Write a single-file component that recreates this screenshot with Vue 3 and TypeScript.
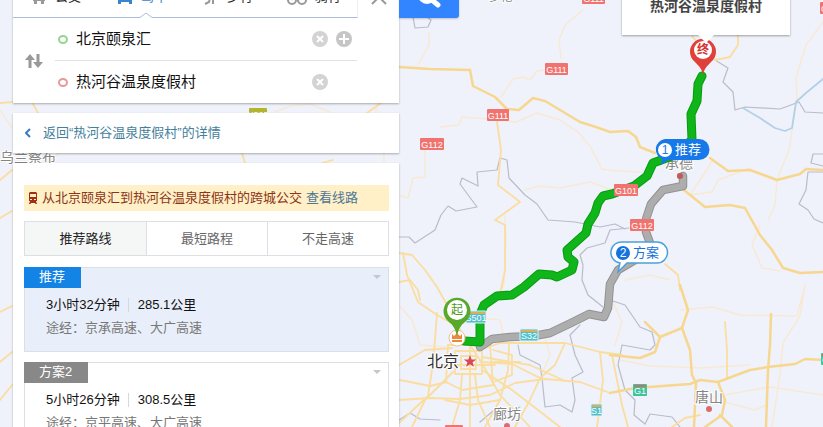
<script setup lang="ts">
import { ref } from 'vue'

interface Mode { id: string; label: string }
interface Route { tag: string; time: string; distance: string; via: string }
interface Shield { text: string; x: number; y: number; w: number; kind: 'national' | 'express' | 'province' | 'local' }

const modes: Mode[] = [
  { id: 'bus', label: '公交' },
  { id: 'car', label: '驾车' },
  { id: 'walk', label: '步行' },
  { id: 'bike', label: '骑行' },
]
const activeMode = ref('car')

const origin = ref('北京颐泉汇')
const destination = ref('热河谷温泉度假村')
function swapEnds() {
  const previous = origin.value
  origin.value = destination.value
  destination.value = previous
}

const strategies = ['推荐路线', '最短路程', '不走高速']
const activeStrategy = ref(0)

const routes: Route[] = [
  { tag: '推荐', time: '3小时32分钟', distance: '285.1公里', via: '途经：京承高速、大广高速' },
  { tag: '方案2', time: '5小时26分钟', distance: '308.5公里', via: '途经：京平高速、大广高速' },
]
const activeRoute = ref(0)

const minorRoads = [
  'M429 33 429 45 418 65',
  'M561 58 559 40 565 25 583 10',
  'M501 97 513 79 523 77 530 80 537 71 546 70',
  'M440 127 459 125 462 117 490 119 516 122 537 113 560 120 578 132 590 146 602 169 618 171 640 172',
  'M425 150 425 177 413 178 408 198 399 195',
  'M525 190 540 186 560 188 590 182 612 190',
  'M823 22 806 45 796 78 797 98 789 150 777 180 775 205 768 220',
  'M713 160 690 195 712 192 718 180 750 168',
  'M760 225 752 245 762 268 780 271',
  'M680 310 713 307 740 315 797 316 805 285 800 316 783 343 780 375 772 427',
  'M625 280 650 275 670 280',
  'M620 360 650 366 700 368 750 365',
  'M696 400 735 393 770 387 823 395',
  'M725 402 755 410 766 405',
  'M612 300 622 322 615 345',
  'M399 305 412 320 420 345 445 347',
  'M480 318 500 320 505 343',
  'M275 112 290 106 310 104 330 112',
  'M40 163 60 153 M376 103 376 113 M384 153 384 163',
  'M505 215 506 240 504 285 495 298',
  'M545 338 550 355 540 378',
  'M0 110 12 128',
]
const roads = [
  'M497 122 501 150 498 185 520 202 495 220 505 225 505 270 500 295',
  'M715 60 730 57 738 45 738 34',
  'M692 36 700 45',
  'M0 103 13 102 M33 104 38 113 M381 103 367 113 M333 160 322 163 M242 153 245 163',
  'M0 180 12 170 M0 218 12 211 M0 312 12 306 M0 362 12 352 M0 400 12 385',
  'M399 253 412 255 425 270 437 287 447 305 460 330 480 360 500 395 530 427',
  'M403 253 407 275 418 302 437 315 455 325',
  'M399 282 410 280 418 290 420 300',
  'M437 313 435 340 432 370 428 396 399 423',
  'M399 400 430 398 460 399 490 395 515 383 545 379 580 382 610 393',
  'M480 350 500 343 565 343 600 352 622 355',
  'M480 362 512 364 540 378',
  'M462 375 460 400 452 427',
  'M475 375 478 400 490 427',
  'M453 372 425 400 412 427',
  'M482 370 512 390 560 427',
  'M482 357 530 365 565 381',
  'M600 353 603 380 597 427',
  'M509 345 508 370 500 400 485 427',
  'M565 343 555 365 540 378 530 400 515 427',
  'M399 365 425 350 452 348',
  'M445 400 470 405 500 400',
  'M448 345 490 345 493 385 462 390 446 382Z',
  'M455 351 482 351 482 374 455 374Z',
  'M461 356 476 356 476 369 461 369Z',
  'M400 380 430 386 447 382',
  'M493 362 520 362',
  'M493 350 512 355 512 375 493 382',
  'M470 345 470 427 M440 365 495 365',
  'M725 322 727 350 727 378',
  'M665 264 678 275 680 290',
  'M672 427 685 418 700 415',
  'M612 355 622 405 628 427',
]
const trunks = [
  'M399 67 430 69 470 70 473 86 481 90 495 97 507 109 519 110 533 98 545 101 560 110 580 122 596 127 610 132 628 131 636 137 640 147 655 153',
  'M710 158 728 171 750 170 777 180 800 174 806 169 823 170',
  'M684 190 705 207 730 205 745 208 760 235 772 250 783 268 800 273 823 272',
  'M680 285 688 310 682 328 660 337 645 322 M660 337 655 352 640 358 610 355',
  'M682 328 690 350 692 375 696 383 694 427',
  'M610 393 635 388 690 384 700 380 718 382 750 370 768 367 795 364 805 359 823 360',
  'M771 314 770 345 768 370 766 427',
  'M718 382 725 400 722 415 705 427 M720 415 732 427',
]
const borders = [
  'M399 237 409 237 415 243 435 230 441 215 448 206 456 211 477 207 460 184 462 178 478 186 477 172 497 170 500 158 507 160 509 178 525 195 537 204 548 220 575 222 600 227 615 224 625 229',
  'M629 228 610 230 605 243 587 248 580 255 583 265 582 280 588 295 603 307',
  'M715 60 728 68 723 82 733 92 735 110 745 107 780 109 799 102 805 112 823 113',
  'M823 154 813 154 811 163 823 166 M823 172 808 172 806 190 799 204 808 210 814 219 823 223',
  'M610 300 625 305 640 327 652 332 655 345 650 350 622 345 618 365 625 390 635 400 634 415 645 424 650 414 672 417 680 427',
  'M518 345 520 355 540 365 542 378 545 407 560 405 572 412 575 400 572 378 583 372 575 355 570 335 580 325',
  'M413 17 415 28 428 27 431 20 427 17',
  'M399 420 410 413 420 419 440 420 M480 422 493 411 508 412 520 407',
]
const rivers = ['M743 108 760 118 775 128 785 131 792 128 796 102 806 93 823 79']

const shields: Shield[] = [
  { text: 'G111', x: 582, y: -8, w: 23, kind: 'national' },
  { text: 'G111', x: 545, y: 63, w: 23, kind: 'national' },
  { text: 'G111', x: 487, y: 109, w: 22, kind: 'national' },
  { text: 'G112', x: 420, y: 138, w: 24, kind: 'national' },
  { text: 'G101', x: 614, y: 184, w: 24, kind: 'national' },
  { text: 'G112', x: 630, y: 219, w: 24, kind: 'national' },
  { text: 'G101', x: 820, y: 2, w: 24, kind: 'national' },
  { text: 'G102', x: 445, y: 425, w: 18, kind: 'national' },
  { text: 'S501', x: 466, y: 311, w: 20, kind: 'province' },
  { text: 'S32', x: 520, y: 329, w: 18, kind: 'province' },
  { text: 'S1', x: 591, y: 404, w: 11, kind: 'province' },
  { text: 'G1', x: 633, y: 384, w: 14, kind: 'express' },
  { text: 'G1', x: 821, y: 353, w: 14, kind: 'express' },
  { text: 'X505', x: 249, y: 108, w: 18, kind: 'local' },
]

const bestPath = 'M702 76 698 84 697 101 691 114 692 140 672 156 653 163 647 176 634 186 612 194 603 196 598 203 595 213 588 224 586 233 567 250 568 257 574 262 572 270 557 277 552 275 539 274 524 287 512 295 497 296 484 305 480 314 480 342 464 341'
const altPath = 'M683 176 683 186 663 190 651 204 646 219 646 232 650 243 635 260 618 270 610 284 608 308 604 317 589 314 571 323 550 333 534 336 510 337 492 339 480 347'
</script>

<template>
  <main class="page">
    <svg class="map" viewBox="0 0 823 427" preserveAspectRatio="xMinYMin slice" role="img" aria-label="地图">
      <g class="line">
        <path v-for="d in minorRoads" :key="d" :d="d" class="minor" />
        <path v-for="d in borders" :key="d" :d="d" class="border" />
        <path v-for="d in rivers" :key="d" :d="d" class="river" />
        <path v-for="d in roads" :key="d" :d="d" class="road" />
        <path v-for="d in trunks" :key="d" :d="d" class="trunk" />
      </g>

      <g class="city">
        <text x="0" y="162">乌兰察布</text>
        <text x="489" y="1" class="small">多伦</text>
        <text x="665" y="168">承德</text>
        <text x="493" y="419">廊坊</text>
        <text x="695" y="402">唐山</text>
      </g>
      <g class="dot">
        <circle cx="680" cy="176" r="3" />
        <circle cx="507" cy="426" r="3" />
        <circle cx="709" cy="409" r="3" />
      </g>

      <g class="line">
        <path :d="altPath" class="alt-edge" />
        <path :d="altPath" class="alt" />
        <path :d="bestPath" class="best-edge" />
        <path :d="bestPath" class="best" />
      </g>
      <circle cx="680" cy="176" r="3" class="faded-dot" />

      <g v-for="s in shields" :key="`${s.x}-${s.y}`" class="shield" :class="s.kind">
        <rect :x="s.x" :y="s.y" :width="s.w" height="12" rx="1" class="plate" />
        <rect v-if="s.kind !== 'national' && s.kind !== 'local'" :x="s.x + 1" :y="s.y + 1" :width="s.w - 2" height="2" class="strip" />
        <text :x="s.x + s.w / 2" :y="s.y + 10">{{ s.text }}</text>
      </g>

      <text x="427" y="367" class="capital">北京</text>
      <path d="M470 355l1.6 4.4 4.6.1-3.6 2.8 1.3 4.5-3.9-2.6-3.9 2.6 1.3-4.5-3.6-2.8 4.6-.1z" class="star" />

      <circle cx="457" cy="338" r="8" class="hub" />
      <path d="M452 334l2 2 3-3 3 3 2-2v5h-10zM452 340h10v2h-10z" class="hub-mark" />

      <g class="pin start">
        <path d="M457 336c-2-8-4-11-8-14a13.500 13.500 0 1 1 16 0c-4 3-6 6-8 14z" />
        <circle cx="457" cy="310" r="10" />
        <text x="457" y="314">起</text>
      </g>
      <g class="pin end">
        <path d="M703 75c-1-6-4-9-8-13a13 13 0 1 1 16 0c-4 4-7 7-8 13z" />
        <circle cx="703" cy="50" r="9" />
        <text x="703" y="54">终</text>
      </g>

      <g class="bubble first">
        <path d="M665 139h34a10.500 10.500 0 0 1 0 21h-31l-7 5 1-6a10.500 10.500 0 0 1 3-20z" />
        <circle cx="665" cy="150" r="7" />
        <text x="665" y="154" class="number">1</text>
        <text x="688" y="154" class="name">推荐</text>
      </g>
      <g class="bubble second">
        <path d="M623 242h34a10.500 10.500 0 0 1 0 21h-30l-9 9 2-9a10.500 10.500 0 0 1 3-21z" />
        <circle cx="623" cy="253" r="7" />
        <text x="623" y="257" class="number">2</text>
        <text x="646" y="257" class="name">方案</text>
      </g>
    </svg>

    <div class="callout">热河谷温泉度假村</div>

    <div class="overlay">
      <div class="column">
        <section class="panel search">
          <div class="head">
            <nav class="modes">
              <button v-for="m in modes" :key="m.id" type="button" class="mode" :class="{ active: m.id === activeMode }" @click="activeMode = m.id">
                <svg v-if="m.id === 'bus'" class="icon" viewBox="0 0 16 16"><path d="M2 1h12v11h-1v3h-3v-3H6v3H3v-3H2zm2 2v4h8V3z" fill-rule="evenodd" fill="currentColor" /></svg>
                <svg v-else-if="m.id === 'car'" class="icon" viewBox="0 0 16 16"><path d="M3 2h10l2 5v8h-3v-2H4v2H1V7zm1 2L3 7h10l-1-3zM3 9v2h3V9zm7 0v2h3V9z" fill-rule="evenodd" fill="currentColor" /></svg>
                <svg v-else-if="m.id === 'walk'" class="icon" viewBox="0 0 16 16"><path d="M9 1v4l-4 3M8 5l2 5v5M7 9l-1 4-4 2M9 6l4 2" fill="none" stroke="currentColor" stroke-width="2" /></svg>
                <svg v-else class="icon wide" viewBox="0 0 20 16"><g fill="none" stroke="currentColor" stroke-width="2"><circle cx="5" cy="11" r="4" /><circle cx="15" cy="11" r="4" /><path d="M5 11l3-7h6l1 7M8 5l3 6 3-5" /></g></svg>
                <span>{{ m.label }}</span>
              </button>
              <svg class="notch" viewBox="0 0 14 6"><path d="M0 5h1l6-4 6 4h1v1H0z" fill="#fff" /><path d="M0 5.500h1l6-4.500 6 4.500h1" fill="none" stroke="#aabdd9" /></svg>
            </nav>
            <button type="button" class="close" aria-label="关闭"><svg viewBox="0 0 16 16" class="icon"><path d="M1 1l14 14M15 1L1 15" stroke="#999" stroke-width="2" /></svg></button>
          </div>
          <form class="ends" @submit.prevent>
            <button type="button" class="swap" aria-label="交换起终点" @click="swapEnds">
              <svg viewBox="0 0 18 16"><path d="M5 15V4M13 1v11" stroke="#999" stroke-width="3" /><path d="M0 7l5-6 5 6zM8 9l5 6 5-6z" fill="#999" /></svg>
            </button>
            <div class="fields">
              <div class="field">
                <i class="ring green"></i>
                <input v-model="origin" type="text" aria-label="起点" />
                <button type="button" class="round" aria-label="清空起点" @click="origin = ''"><svg viewBox="0 0 16 16"><circle cx="8" cy="8" r="8" fill="#d3d3d3" /><path d="M5 5l6 6M11 5l-6 6" stroke="#fff" stroke-width="2" /></svg></button>
                <button type="button" class="round" aria-label="添加途经点"><svg viewBox="0 0 16 16"><circle cx="8" cy="8" r="8" fill="#c6c6c6" /><path d="M3 8h10M8 3v10" stroke="#fff" stroke-width="2" /></svg></button>
              </div>
              <div class="field">
                <i class="ring red"></i>
                <input v-model="destination" type="text" aria-label="终点" />
                <button type="button" class="round" aria-label="清空终点" @click="destination = ''"><svg viewBox="0 0 16 16"><circle cx="8" cy="8" r="8" fill="#d3d3d3" /><path d="M5 5l6 6M11 5l-6 6" stroke="#fff" stroke-width="2" /></svg></button>
                <span class="round"></span>
              </div>
            </div>
          </form>
        </section>

        <a href="#" class="panel back">
          <svg viewBox="0 0 6 10"><path d="M5 1L1 5l4 4" fill="none" stroke="#3a7bc8" stroke-width="2" /></svg>
          <span>返回“热河谷温泉度假村”的详情</span>
        </a>

        <section class="panel results">
          <p class="notice">
            <svg viewBox="0 0 10 12"><path d="M2 0h6l1 1v8H8l1 3H7.500L7 11H3l-.5 1H1l1-3H1V1zm0 2v3h6V2zm0 5v1h2V7zm4 0v1h2V7z" fill-rule="evenodd" fill="#a03010" /></svg>
            <span>从北京颐泉汇到热河谷温泉度假村的跨城公交</span>
            <a href="#">查看线路</a>
          </p>
          <div class="strategies">
            <button v-for="(s, i) in strategies" :key="s" type="button" :class="{ active: i === activeStrategy }" @click="activeStrategy = i">{{ s }}</button>
          </div>
          <article v-for="(r, i) in routes" :key="r.tag" class="route" :class="{ active: i === activeRoute }" @click="activeRoute = i">
            <header>
              <span class="tag">{{ r.tag }}</span>
              <i class="arrow"></i>
            </header>
            <div class="facts"><span>{{ r.time }}</span><span class="distance">{{ r.distance }}</span></div>
            <div class="via">{{ r.via }}</div>
          </article>
        </section>
      </div>
      <button type="button" class="go" aria-label="搜索">
        <svg viewBox="0 0 24 24"><circle cx="10" cy="10" r="7" fill="none" stroke="#fff" stroke-width="4" /><path d="M15 15l6 5" stroke="#fff" stroke-width="5" stroke-linecap="round" /></svg>
      </button>
    </div>
  </main>
</template>

<style>
body {
  margin: 0;
}
</style>

<style scoped>
.page {
  position: relative;
  height: 100vh;
  overflow: hidden;
  background: #eff2fa;
  font: 13px/20px "Liberation Sans", "Noto Sans CJK SC", sans-serif;
  color: #222;
}
button {
  border: 0;
  padding: 0;
  background: none;
  font: inherit;
  color: inherit;
  cursor: pointer;
}
a {
  text-decoration: none;
}
svg {
  display: block;
}

.map {
  position: absolute;
  inset: 0;
  width: 100%;
  height: 100%;
}
.line path {
  fill: none;
  stroke-linejoin: round;
  stroke-linecap: round;
}
.line .minor { stroke: #f8e9d5; stroke-width: 1.5; }
.line .road { stroke: #fadd9f; stroke-width: 1.800; }
.line .trunk { stroke: #f7d78f; stroke-width: 2.500; }
.line .border { stroke: #b9bcc9; stroke-width: 1.200; }
.line .river { stroke: #b3d0e9; stroke-width: 1.800; }
.line .alt-edge { stroke: #929292; stroke-width: 8.500; }
.line .alt { stroke: #adadad; stroke-width: 6.500; }
.line .best-edge { stroke: #089b12; stroke-width: 9; }
.line .best { stroke: #10b51a; stroke-width: 7; }
.city text {
  font-size: 14px;
  fill: #858585;
  stroke: #fff;
  stroke-width: 2;
  paint-order: stroke;
}
.city .small { font-size: 12px; }
.dot circle { fill: #dc6b70; }
.faded-dot { fill: #c55a5a; }
.shield text {
  font-size: 9px;
  text-anchor: middle;
  fill: #fff;
}
.national .plate { fill: #f1736f; }
.province .plate { fill: #51bfca; stroke: #dff3f2; }
.province .strip { fill: #dcae5c; }
.express .plate { fill: #3cc49b; }
.express .strip { fill: #cc7068; }
.local .plate { fill: #b4b52f; }
.capital {
  font-size: 16px;
  fill: #333;
  stroke: #fff;
  stroke-width: 2;
  paint-order: stroke;
}
.star { fill: #dc4850; }
.hub { fill: #fff; stroke: #f2bd90; }
.hub-mark { fill: #ec8a3c; }
.pin text {
  font-size: 12px;
  text-anchor: middle;
}
.pin circle { fill: #fff; }
.start path { fill: #58a92a; }
.start text { fill: #4a9820; }
.end path { fill: #e0403a; }
.end text { fill: #d8332f; font-weight: bold; }
.bubble text { text-anchor: middle; }
.bubble .number { font-size: 12px; }
.bubble .name { font-size: 13px; }
.first path, .first .number { fill: #1778ea; }
.first circle, .first .name { fill: #fff; }
.second path { fill: #fff; stroke: #4ba0dc; stroke-width: 1.500; }
.second circle, .second .name { fill: #1672dc; }
.second .number { fill: #fff; }

.callout {
  position: absolute;
  left: 622px;
  top: -30px;
  box-sizing: border-box;
  width: 168px;
  padding: 26px 0 19px;
  background: #fff;
  box-shadow: 0 1px 2px rgba(0, 0, 0, 0.35);
  font-size: 14px;
  font-weight: bold;
  color: #444;
  text-align: center;
}
.callout::after {
  content: "";
  position: absolute;
  left: 76px;
  top: 100%;
  border: 8px solid transparent;
  border-top-color: #fff;
  border-bottom: 0;
}

.overlay {
  position: relative;
  display: flex;
  align-items: flex-start;
  margin-top: -24px;
  padding-left: 13px;
}
.column {
  display: flex;
  flex-direction: column;
  gap: 10px;
  flex: 0 0 386px;
}
.panel {
  background: #fff;
  box-shadow: 0 1px 2px rgba(0, 0, 0, 0.3);
}
.head {
  display: flex;
  height: 42px;
}
.modes {
  position: relative;
  flex: 1;
  display: grid;
  grid-template-columns: repeat(4, 1fr);
  box-sizing: border-box;
  border-bottom: 1px solid #aabdd9;
  border-right: 1px solid #eee;
}
.mode {
  display: flex;
  align-items: center;
  justify-content: center;
  gap: 8px;
}
.mode .icon { color: #999; }
.mode.active, .mode.active .icon { color: #3a82d2; }
.icon { width: 16px; height: 16px; }
.icon.wide { width: 20px; }
.notch {
  position: absolute;
  left: 126px;
  bottom: -1px;
  width: 14px;
  height: 6px;
}
.close {
  width: 41px;
  display: grid;
  place-items: center;
}
.ends {
  display: flex;
  align-items: center;
}
.swap {
  width: 42px;
  display: flex;
  justify-content: center;
}
.swap svg { width: 18px; height: 16px; }
.fields {
  flex: 1;
  min-width: 0;
  margin-right: 42px;
}
.field {
  display: flex;
  align-items: center;
  gap: 8px;
  height: 42px;
  padding-right: 5px;
}
.field + .field { border-top: 1px solid #e2e2e2; }
.ring {
  width: 6px;
  height: 5px;
  margin-left: 3px;
  border: 2px solid;
  border-radius: 50%;
}
.green { border-color: #92d692; }
.red { border-color: #e59a9a; }
.field input {
  flex: 1;
  min-width: 0;
  height: 28px;
  border: 0;
  padding: 0;
  outline: 0;
  background: none;
  font: 15px/28px "Liberation Sans", "Noto Sans CJK SC", sans-serif;
  color: #111;
}
.round, .round svg {
  width: 16px;
  height: 16px;
}
.back {
  display: flex;
  align-items: center;
  gap: 12px;
  height: 40px;
  padding-left: 12px;
  color: #44809c;
}
.back svg { width: 6px; height: 10px; }
.results { padding: 22px 10px 40px 11px; }
.notice {
  display: flex;
  align-items: center;
  gap: 4px;
  height: 26px;
  margin: 0 0 10px;
  padding-left: 4px;
  background: #fff0c8;
  color: #8c3414;
  white-space: nowrap;
}
.notice svg { width: 10px; height: 12px; }
.notice a { color: #4e7794; }
.strategies {
  display: grid;
  grid-template-columns: repeat(3, 1fr);
  margin-bottom: 11px;
  border: 1px solid #dcdfe3;
}
.strategies button {
  height: 33px;
  color: #666;
}
.strategies button + button { border-left: 1px solid #dcdfe3; }
.strategies .active {
  background: #f5f7f7;
  color: #222;
}
.route {
  box-sizing: border-box;
  height: 85px;
  margin-bottom: 10px;
  box-shadow: inset 0 0 0 1px #dbdfe6;
  cursor: pointer;
}
.route.active { background: #e9effa; }
.route header {
  display: flex;
  justify-content: space-between;
}
.tag {
  padding: 0 16px 1px 15px;
  background: #888;
  color: #fff;
}
.active .tag { background: #1383e6; }
.arrow {
  margin: 8px 8px 0 0;
  height: 0;
  border: 4px solid transparent;
  border-top-color: #c4c8ce;
  border-bottom: 0;
}
.facts {
  display: flex;
  align-items: center;
  margin-top: 7px;
  padding-left: 22px;
  color: #111;
}
.distance {
  margin-left: 8px;
  padding-left: 9px;
  line-height: 14px;
  border-left: 1px solid #d5d8dd;
}
.via {
  margin-top: 3px;
  padding-left: 22px;
  color: #777;
}
.go {
  display: flex;
  align-items: center;
  justify-content: center;
  width: 60px;
  height: 42px;
  background: #3385ff;
  border-radius: 0 0 3px 0;
  box-shadow: 0 1px 2px rgba(0, 0, 0, 0.2);
}
.go svg { width: 24px; height: 24px; }
</style>
